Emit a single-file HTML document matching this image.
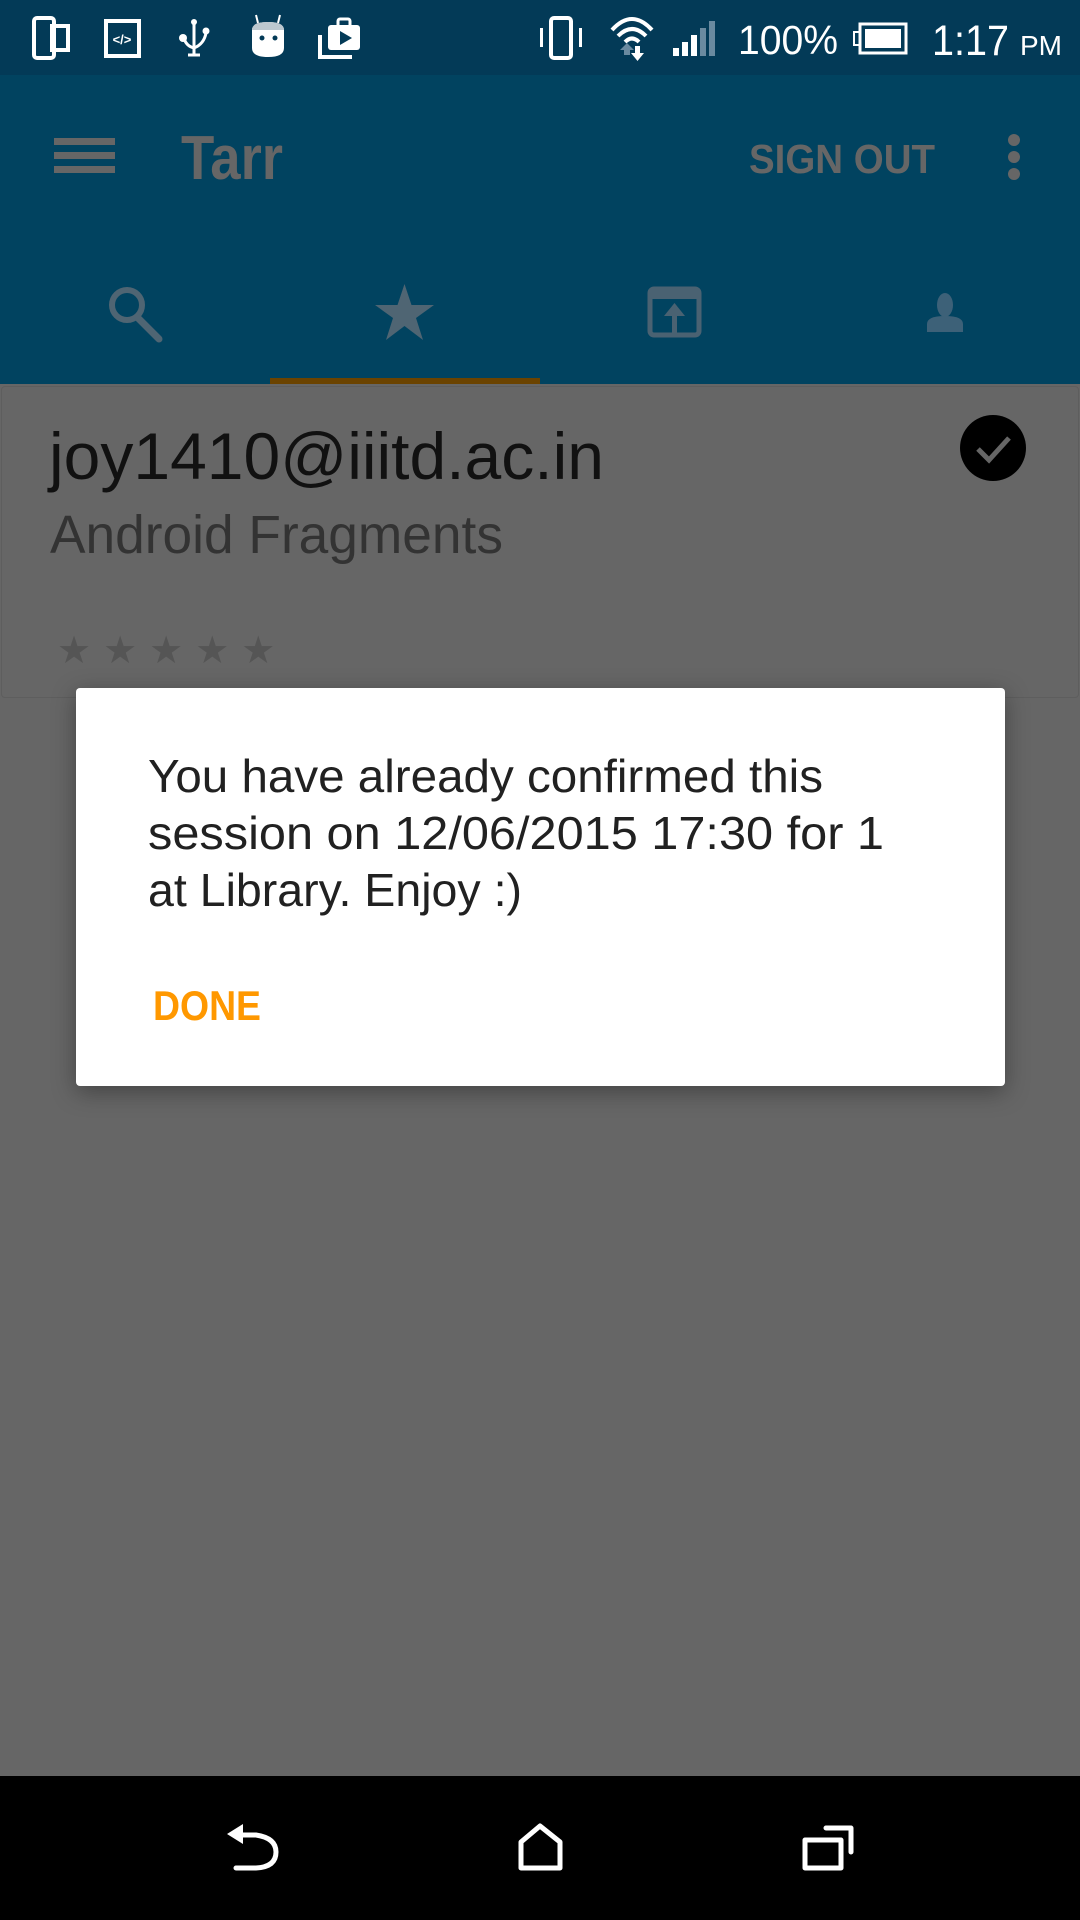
<!DOCTYPE html>
<html><head><meta charset="utf-8">
<style>
html,body{margin:0;padding:0;width:1080px;height:1920px;overflow:hidden;background:#666;font-family:"Liberation Sans",sans-serif;}
.abs{position:absolute;}
#status{left:0;top:0;width:1080px;height:75px;background:#033a57;}
#bar{left:0;top:75px;width:1080px;height:309px;background:#014360;}
#ind{left:270px;top:378px;width:270px;height:6px;background:#6b4300;}
#card{left:1px;top:386px;width:1076px;height:310px;border:1px solid #5e5e5e;border-radius:4px;background:#666;}
#dlg{left:76px;top:688px;width:929px;height:398px;background:#fff;border-radius:4px;box-shadow:0 6px 24px rgba(0,0,0,.35);}
#nav{left:0;top:1776px;width:1080px;height:144px;background:#000;}
</style></head><body>
<div id="status" class="abs">
<svg class="abs" style="left:0;top:0" width="1080" height="75" viewBox="0 0 1080 75">
 <g fill="none" stroke="#fff" stroke-width="4">
  <rect x="34" y="18" width="20" height="40" rx="3"/>
  <rect x="52" y="26" width="16" height="24"/>
  <rect x="106" y="21" width="33" height="35"/>
 </g>
 <text x="122" y="44" fill="#fff" font-size="13" font-family="Liberation Sans" text-anchor="middle" font-weight="bold">&lt;/&gt;</text>
 <g stroke="#fff" stroke-width="3" fill="none">
  <line x1="194" y1="22" x2="194" y2="55"/>
  <path d="M184 38 Q186 46 194 48 Q204 44 206 33"/>
  <line x1="188" y1="55" x2="200" y2="55"/>
 </g>
 <circle cx="194" cy="22" r="3" fill="#fff"/><circle cx="183" cy="38" r="4" fill="#fff"/><circle cx="206" cy="31" r="3.5" fill="#fff"/>
 <path d="M252 30 Q252 22 268 22 Q284 22 284 30 L284 48 Q284 57 268 57 Q252 57 252 48Z" fill="#fff"/>
 <path d="M252 30 Q252 22 268 22 Q284 22 284 30Z" fill="#bcc8d0"/>
 <line x1="258" y1="23" x2="256" y2="15" stroke="#fff" stroke-width="2"/><line x1="278" y1="23" x2="280" y2="15" stroke="#fff" stroke-width="2"/>
 <circle cx="262" cy="38" r="2.5" fill="#033a57"/><circle cx="275" cy="38" r="2.5" fill="#033a57"/>
 <rect x="328" y="25" width="32" height="25" rx="3" fill="#fff"/>
 <rect x="338" y="19" width="12" height="8" rx="2" fill="none" stroke="#fff" stroke-width="3"/>
 <path d="M340 31 L352 38 L340 45Z" fill="#033a57"/>
 <path d="M320 35 L320 57 L352 57" stroke="#fff" stroke-width="4" fill="none"/>
 <g fill="#fff">
  <rect x="551" y="18" width="20" height="40" rx="3" fill="none" stroke="#fff" stroke-width="4"/>
  <rect x="540" y="28" width="3" height="19"/><rect x="579" y="28" width="3" height="19"/>
 </g>
 <g fill="none" stroke="#fff" stroke-width="4">
  <path d="M612 30 Q632 8 652 30"/><path d="M618 36 Q632 22 646 36"/><path d="M625 42 Q632 35 639 42"/>
 </g>
 <path d="M624 55 L624 50 L620 50 L627 43 L634 50 L630 50 L630 55Z" fill="#6a8aa0"/>
 <path d="M635 46 L640 46 L640 53 L644 53 L637.5 61 L631 53 L635 53Z" fill="#fff"/>
 <rect x="673" y="48" width="6" height="8" fill="#fff"/><rect x="682" y="42" width="6" height="14" fill="#fff"/><rect x="691" y="35" width="6" height="21" fill="#fff"/>
 <rect x="700" y="28" width="6" height="28" fill="#6a8aa0"/><rect x="709" y="21" width="6" height="35" fill="#6a8aa0"/>
 <text x="738" y="54" fill="#fff" font-size="41" font-family="Liberation Sans" textLength="100" lengthAdjust="spacingAndGlyphs">100%</text>
 <rect x="860" y="24" width="46" height="29" fill="none" stroke="#fff" stroke-width="3"/>
 <rect x="865" y="29" width="36" height="19" fill="#fff"/>
 <rect x="854" y="32" width="6" height="13" fill="none" stroke="#fff" stroke-width="2"/>
 <text x="932" y="55" fill="#fff" font-size="43" font-family="Liberation Sans" textLength="77" lengthAdjust="spacingAndGlyphs">1:17</text>
 <text x="1020" y="55" fill="#fff" font-size="28" font-family="Liberation Sans">PM</text>
</svg>
</div>
<div id="bar" class="abs">
<svg class="abs" style="left:0;top:0" width="1080" height="309" viewBox="0 75 1080 309">
 <g fill="#666"><rect x="54" y="138" width="61" height="7"/><rect x="54" y="152" width="61" height="7"/><rect x="54" y="166" width="61" height="7"/>
 <circle cx="1014" cy="140" r="6"/><circle cx="1014" cy="157" r="6"/><circle cx="1014" cy="174" r="6"/></g>
 <text x="181" y="179" fill="#666" font-size="62" font-family="Liberation Sans" font-weight="bold" textLength="102" lengthAdjust="spacingAndGlyphs">Tarr</text>
 <text x="749" y="173" fill="#666" font-size="41" font-family="Liberation Sans" font-weight="bold" textLength="186" lengthAdjust="spacingAndGlyphs">SIGN OUT</text>
 <circle cx="127" cy="305" r="15" fill="none" stroke="#4f6573" stroke-width="6"/>
 <line x1="138" y1="318" x2="159" y2="339" stroke="#4f6573" stroke-width="7" stroke-linecap="round"/>
 <path d="M404.5 284 L411.5 305 L434 305 L416 318 L423 340 L404.5 326 L386 340 L393 318 L375 305 L397.5 305Z" fill="#4f6573"/>
 <rect x="650" y="289" width="49" height="46" rx="4" fill="none" stroke="#4a6272" stroke-width="5"/>
 <rect x="650" y="289" width="49" height="10" fill="#4a6272"/>
 <rect x="672" y="312" width="5" height="25" fill="#4a6272"/><path d="M664 316 L674.5 303 L685 316Z" fill="#4a6272"/>
 <ellipse cx="945" cy="305" rx="8" ry="12" fill="#3d6178"/>
 <path d="M927 332 L927 324 Q927 316 945 316 Q963 316 963 324 L963 332Z" fill="#3d6178"/>
</svg>
</div>
<div id="ind" class="abs"></div>
<div id="card" class="abs">
 <div class="abs" style="left:47px;top:31px;font-size:66px;color:#111;white-space:nowrap;">joy1410@iiitd.ac.in</div>
 <svg class="abs" style="left:0;top:100px" width="700" height="80">
  <text x="48" y="66" fill="#333" font-size="54" font-family="Liberation Sans" textLength="453" lengthAdjust="spacingAndGlyphs">Android Fragments</text>
 </svg>
 <div class="abs" style="left:55px;top:241px;font-size:38px;color:#555;letter-spacing:12px;">★★★★★</div>
 <svg class="abs" style="left:957px;top:27px" width="70" height="70" viewBox="0 0 70 70">
  <circle cx="34" cy="34" r="33" fill="#000"/>
  <path d="M19 35 L30 46 L50 24" stroke="#666" stroke-width="5" fill="none"/>
 </svg>
</div>
<div id="dlg" class="abs">
 <svg class="abs" style="left:0;top:0" width="929" height="398">
  <g fill="#212121" font-size="46" font-family="Liberation Sans">
   <text x="72" y="104" textLength="675" lengthAdjust="spacingAndGlyphs">You have already confirmed this</text>
   <text x="72" y="161" textLength="736" lengthAdjust="spacingAndGlyphs">session on 12/06/2015 17:30 for 1</text>
   <text x="72" y="218" textLength="374" lengthAdjust="spacingAndGlyphs">at Library. Enjoy :)</text>
  </g>
  <text x="77" y="332" fill="#ff9800" font-size="42" font-weight="bold" font-family="Liberation Sans" textLength="108" lengthAdjust="spacingAndGlyphs">DONE</text>
 </svg>
</div>
<div id="nav" class="abs">
<svg class="abs" style="left:0;top:0" width="1080" height="144" viewBox="0 1776 1080 144">
 <g fill="none" stroke="#fff" stroke-width="5" stroke-linejoin="round" stroke-linecap="round">
  <path d="M242 1835 L256 1835 Q276 1838 276 1852 Q276 1867 256 1868 L236 1868"/>
  <path d="M521 1842 L540 1826 L560 1842 L560 1868 L521 1868Z"/>
  <rect x="805" y="1840" width="36" height="28"/>
  <path d="M826 1828 L851 1828 L851 1852"/>
 </g>
 <path d="M227 1834 L243 1824 L243 1844Z" fill="#fff"/>
</svg>
</div>
</body></html>
